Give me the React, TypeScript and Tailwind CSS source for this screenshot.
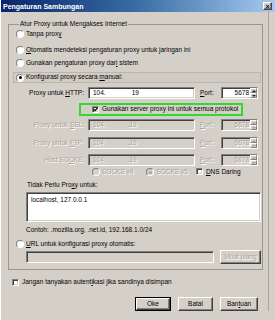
import React from "react";

const sunken =
  "border border-t-[#808080] border-l-[#808080] border-b-white border-r-white shadow-[inset_1px_1px_0_#404040,inset_-1px_-1px_0_#d4d0c8]";
const raised =
  "border border-t-white border-l-white border-b-[#404040] border-r-[#404040] shadow-[inset_-1px_-1px_0_#808080]";
const spinBtn = "border-b border-r border-b-[#808080] border-r-[#808080] border-t border-l border-t-white border-l-white";
const dis = "text-[#a7a39b] [text-shadow:1px_1px_0_#ffffff]";

const Radio = ({ checked, disabled }: { checked?: boolean; disabled?: boolean }) => (
  <span
    className={`inline-flex shrink-0 items-center justify-center w-[8px] h-[8px] rounded-full border border-t-[#808080] border-l-[#808080] border-b-white border-r-white ${
      disabled ? "bg-[#d4d0c8]" : "bg-white"
    }`}
  >
    {checked && (
      <span className={`w-[3px] h-[3px] rounded-full ${disabled ? "bg-[#a7a39b]" : "bg-black"}`} />
    )}
  </span>
);

const Check = ({ checked }: { checked?: boolean }) => (
  <span className={`inline-flex shrink-0 items-center justify-center w-[7px] h-[7px] bg-white ${sunken}`}>
    {checked && (
      <svg width="5" height="5" viewBox="0 0 5 5">
        <path d="M0.5 2.2 L2 3.7 L4.6 0.8" stroke="#000" strokeWidth="1.2" fill="none" />
      </svg>
    )}
  </span>
);

const Field = ({ disabled, dotted }: { disabled?: boolean; dotted?: boolean }) => (
  <div
    className={`${sunken} w-[107px] h-[12px] flex items-center pl-[4px] ${
      disabled ? "bg-[#d4d0c8] " + dis : "bg-white"
    }`}
  >
    <span>104.</span>
    <span className={dotted ? "ml-[22px]" : "ml-[26px]"}>{dotted ? ".19" : "19"}</span>
  </div>
);

const Spin = ({ disabled }: { disabled?: boolean }) => (
  <div
    className={`${sunken} w-[37px] h-[12px] flex items-center justify-end ${
      disabled ? "bg-[#d4d0c8] " + dis : "bg-white"
    }`}
  >
    <span className="mr-[1px]">5678</span>
    <div className="flex flex-col w-[7px] h-[10px]">
      <div className={`flex-1 flex items-center justify-center bg-[#d4d0c8] ${spinBtn}`}>
        <span
          className={`w-0 h-0 border-x-[2px] border-x-transparent border-b-[2px] ${
            disabled ? "border-b-[#a7a39b]" : "border-b-[#222]"
          }`}
        />
      </div>
      <div className={`flex-1 flex items-center justify-center bg-[#d4d0c8] ${spinBtn}`}>
        <span
          className={`w-0 h-0 border-x-[2px] border-x-transparent border-t-[2px] ${
            disabled ? "border-t-[#a7a39b]" : "border-t-[#222]"
          }`}
        />
      </div>
    </div>
  </div>
);

const ProxyRow = ({
  label,
  disabled,
  dotted,
  className,
}: {
  label: React.ReactNode;
  disabled?: boolean;
  dotted?: boolean;
  className?: string;
}) => (
  <div className={`flex items-center h-[12px] ${className}`}>
    <div className={`w-[68px] text-right ${disabled ? dis : ""}`}>{label}</div>
    <div className="ml-[4px]">
      <Field disabled={disabled} dotted={dotted} />
    </div>
    <div className={`ml-[5px] w-[21px] ${disabled ? dis : ""}`}>
      <u>P</u>ort:
    </div>
    <Spin disabled={disabled} />
  </div>
);

const Button = ({ children, isDefault, width }: { children: React.ReactNode; isDefault?: boolean; width: string }) => (
  <div className={`${width} h-[14px] ${isDefault ? "border border-black" : ""}`}>
    <div className={`${raised} w-full h-full bg-[#d4d0c8] flex items-center justify-center`}>{children}</div>
  </div>
);

export default function App() {
  return (
    <div className="w-[275px] h-[320px] bg-[#d4d0c8] font-['Liberation_Sans',Arial,sans-serif] text-[6.5px] leading-none text-black overflow-hidden border-l border-l-white">
      {/* title bar */}
      <div className="h-[12px] flex items-center justify-between bg-linear-to-r from-[#0a246a] via-[#3a6ea5] to-[#a6caf0] pl-[2px] pr-[3px]">
        <span className="text-white font-bold text-[7px]">Pengaturan Sambungan</span>
        <div className={`w-[9px] h-[8px] bg-[#d4d0c8] ${raised} flex items-center justify-center text-[7px] font-bold`}>
          ×
        </div>
      </div>

      <div className="flex">
        <div className="w-[268px] border-r border-r-[#a8a49c]">
          <fieldset className="mt-[8px] ml-[7px] w-[254px] border border-[#9a968e] pl-[7px] pr-[1px] pb-[5px]">
            <legend className="ml-[3px] px-[1px] h-[8px] leading-[8px]">Atur Proxy untuk Mengakses Internet</legend>

            <div className="flex items-center gap-[2px] h-[12px]">
              <Radio />
              <span>
                Tanpa prox<u>y</u>
              </span>
            </div>
            <div className="flex items-center gap-[2px] h-[12px] mt-[4px]">
              <Radio />
              <span>
                <u>O</u>tomatis mendeteksi pengaturan proxy untuk jaringan ini
              </span>
            </div>
            <div className="flex items-center gap-[2px] h-[12px] mt-[1px]">
              <Radio />
              <span>
                Gunakan pengaturan proxy dar<u>i</u> sistem
              </span>
            </div>
            <div className="flex items-center gap-[2px] h-[11px] mt-[3px] -ml-[3px] pl-[2px] border border-[#bab6ae] bg-[#d0ccc4]">
              <Radio checked />
              <span>
                Konfigurasi proxy secara <u>m</u>anual:
              </span>
            </div>

            <ProxyRow
              className="mt-[4px]"
              label={
                <>
                  Proxy untuk <u>H</u>TTP:
                </>
              }
            />

            <div className="mt-[4px] ml-[63px] w-[164px] h-[13px] border-2 border-[#33d633] flex items-center pl-[11px] gap-[3px]">
              <Check checked />
              <span>Gunakan server proxy ini untuk semua protokol</span>
            </div>

            <ProxyRow
              className="mt-[3px]"
              disabled
              dotted
              label={
                <>
                  Proxy untuk <u>S</u>SL:
                </>
              }
            />
            <ProxyRow
              className="mt-[6px]"
              disabled
              dotted
              label={
                <>
                  Proxy untuk <u>F</u>TP:
                </>
              }
            />
            <ProxyRow
              className="mt-[5px]"
              disabled
              dotted
              label={
                <>
                  Host SO<u>C</u>KS:
                </>
              }
            />

            <div className="flex items-center h-[12px] pl-[76px]">
              <Radio disabled />
              <span className={`ml-[2px] ${dis}`}>SOCKS v4</span>
              <span className="ml-[13px]">
                <Radio checked disabled />
              </span>
              <span className={`ml-[2px] ${dis}`}>SOCKS v5</span>
              <span className="ml-[8px]">
                <Check />
              </span>
              <span className="ml-[3px]">
                <u>D</u>NS Daring
              </span>
            </div>

            <div className="h-[10px] mt-[2px] ml-[11px] flex items-center">
              Tidak Perlu Pro<u>x</u>y untuk:
            </div>
            <div className={`${sunken} bg-white ml-[10px] w-[235px] h-[30px] mt-[2px] pl-[4px] pt-[4px]`}>
              localhost, 127.0.0.1
            </div>
            <div className="h-[10px] mt-[3px] ml-[10px] flex items-center">
              Contoh: .mozilla.org, .net.id, 192.168.1.0/24
            </div>
            <div className="flex items-center gap-[2px] h-[12px] mt-[3px]">
              <Radio />
              <span>
                <u>U</u>RL untuk konfigurasi proxy otomatis:
              </span>
            </div>
            <div className="flex items-center h-[14px] ml-[10px]">
              <div className={`${sunken} bg-[#d4d0c8] w-[188px] h-[12px]`} />
              <div className={`ml-[6px] w-[41px] h-[14px] ${raised} flex items-center justify-center ${dis}`}>
                Muat ulang
              </div>
            </div>
          </fieldset>

          <div className="flex items-center gap-[3px] h-[12px] mt-[6px] ml-[11px]">
            <Check />
            <span>
              Jangan tanyakan autent<u>i</u>kasi jika sandinya disimpan
            </span>
          </div>

          <div className="flex justify-end gap-[7px] mt-[9px] pr-[10px]">
            <Button isDefault width="w-[36px]">
              Oke
            </Button>
            <Button width="w-[35px]">Batal</Button>
            <Button width="w-[38px]">
              Ban<u>t</u>uan
            </Button>
          </div>
        </div>
      </div>
    </div>
  );
}
